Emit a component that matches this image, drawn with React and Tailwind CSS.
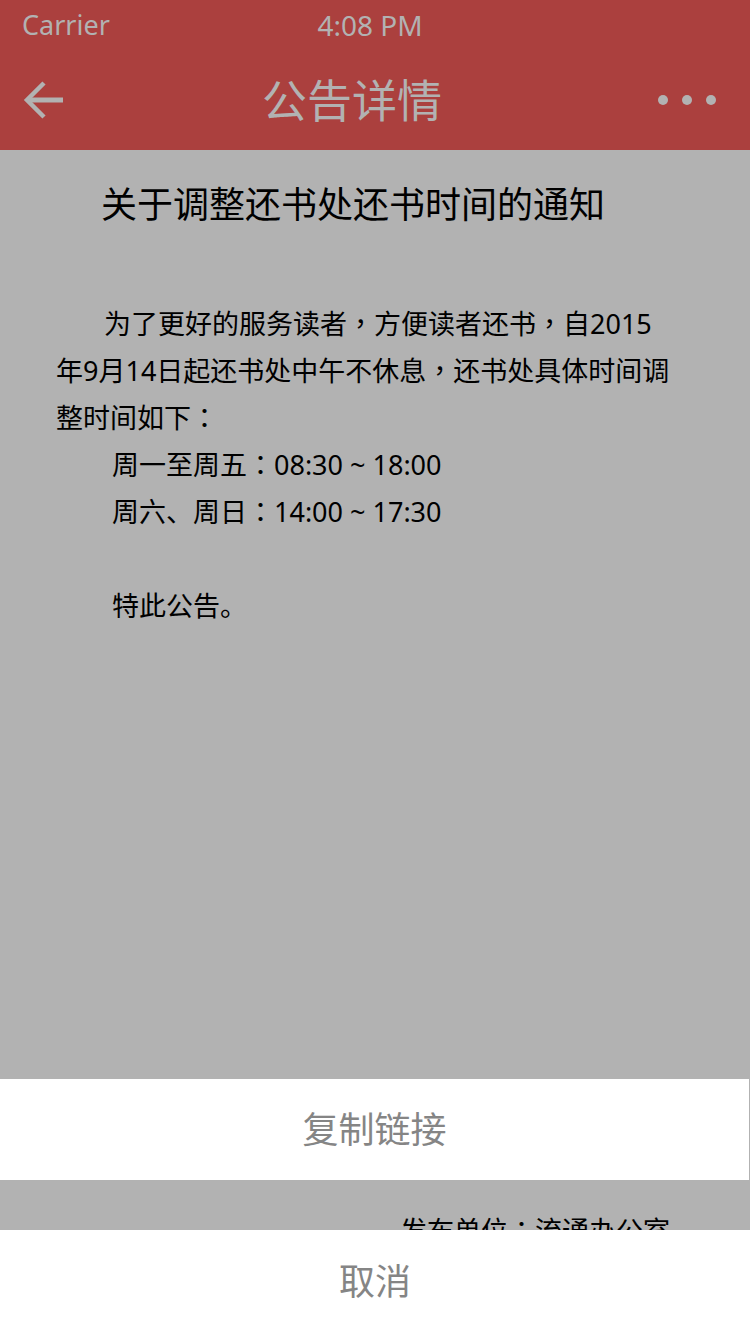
import React from 'react';

const FONT = { fontFamily: '"Noto Sans", "Noto Sans CJK SC", sans-serif' };

// full-width punctuation centred in its box, as in the screenshot
function Pn({ children }) {
  return <span className="font-['Noto_Sans_CJK_TC',sans-serif] leading-[0]">{children}</span>;
}

function BackArrow() {
  return (
    <svg width="42" height="38" viewBox="0 0 42 38" fill="none">
      <path d="M40 19H5" stroke="#b2b2b2" strokeWidth="5" />
      <path d="M21 2L4 19l17 17" stroke="#b2b2b2" strokeWidth="4.5" />
    </svg>
  );
}

function MoreDots() {
  return (
    <div className="flex items-center gap-[14px]">
      <span className="block w-[10px] h-[10px] rounded-full bg-[#b2b2b2]" />
      <span className="block w-[10px] h-[10px] rounded-full bg-[#b2b2b2]" />
      <span className="block w-[10px] h-[10px] rounded-full bg-[#b2b2b2]" />
    </div>
  );
}

export default function App() {
  return (
    <div className="relative w-[750px] h-[1334px] overflow-hidden bg-[#b2b2b2]" style={FONT}>
      {/* Status bar + nav */}
      <div className="bg-[#ab403e]">
        <div className="h-[50px] flex items-center px-[22px] relative text-[#b2b2b2] text-[27px]">
          <span>Carrier</span>
          <span className="absolute left-0 right-0 text-center pr-[10px] text-[28px]">4:08 PM</span>
        </div>
        <div className="h-[100px] flex items-center pl-[23px] pr-[34px]">
          <BackArrow />
          <h1 className="ml-[197px] text-[45px] text-[#b2b2b2] leading-none">公告详情</h1>
          <div className="ml-auto">
            <MoreDots />
          </div>
        </div>
      </div>

      {/* Notice body */}
      <div className="pl-[56px] pr-[76px]">
        <h2 className="mt-[30px] pl-[45px] text-[36px] leading-[50px] text-black">
          关于调整还书处还书时间的通知
        </h2>
        <div className="mt-[70px] text-[27px] leading-[47px] text-black">
          <p className="indent-[48px]">
            为了更好的服务读者<Pn>，</Pn>方便读者还书<Pn>，</Pn>自2015年9月14日起还书处中午不休息<Pn>，</Pn>还书处具体时间调整时间如下<Pn>：</Pn>
          </p>
          <p className="pl-[56px]">周一至周五<Pn>：</Pn>08:30 ~ 18:00</p>
          <p className="pl-[56px]">周六、周日<Pn>：</Pn>14:00 ~ 17:30</p>
          <p className="pl-[56px] h-[47px]"></p>
          <p className="pl-[56px]">特此公告。</p>
        </div>
      </div>
      <p className="mt-[578px] text-right pr-[80px] text-[27px] leading-[47px] text-black">
        发布单位<Pn>：</Pn>流通办公室
      </p>

      {/* Action sheet */}
      <div className="absolute left-0 right-0 bottom-0 flex flex-col">
        <button className="h-[101px] w-[749px] bg-white text-[36px] text-[#858585]">
          复制链接
        </button>
        <div className="h-[50px]" />
        <button className="h-[104px] w-full bg-white text-[36px] text-[#858585]">
          取消
        </button>
      </div>
    </div>
  );
}
